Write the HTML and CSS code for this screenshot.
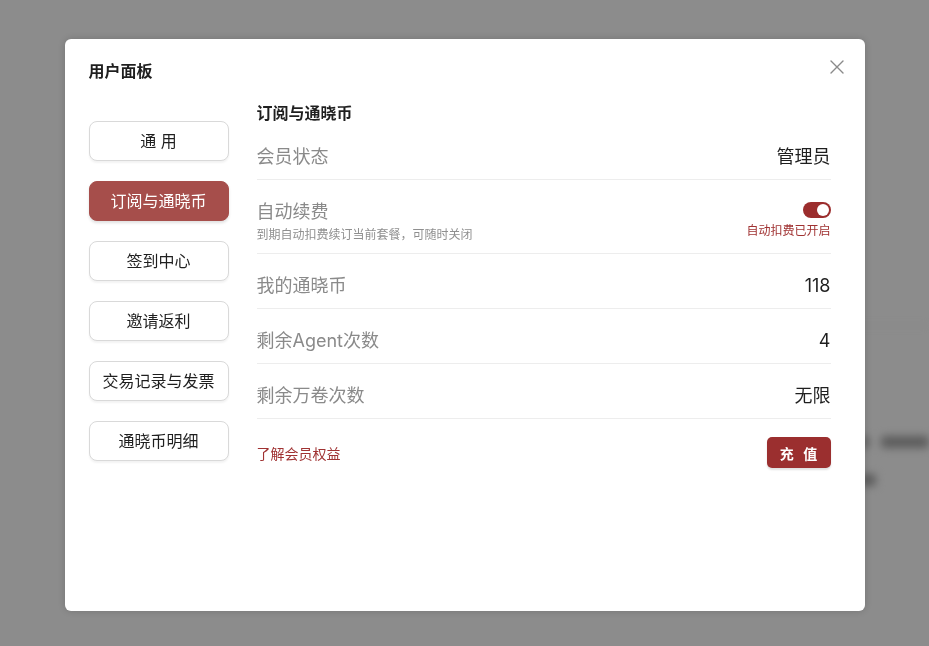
FILE: index.html
```html
<!DOCTYPE html>
<html>
<head>
<meta charset="UTF-8">
<link rel="stylesheet" href="styles.css">
</head>
<body>
<div class="page">
	<div class="page-top"></div>
	<div class="ghost-line">
		<span class="ghost w1"></span>
		<span class="ghost w2"></span>
	</div>
	<div class="ghost-line second">
		<span class="ghost w3"></span>
	</div>
</div>

<div class="mask">
	<div class="modal">
		<div class="modal-title">用户面板</div>
		<span class="close" title="关闭">
			<svg width="14" height="14" viewBox="0 0 14 14"><path d="M1 1L13 13M13 1L1 13" stroke="#8a8a8a" stroke-width="1.4" fill="none" stroke-linecap="round"/></svg>
		</span>

		<div class="modal-body">
			<div class="side">
				<button class="tab">通 用</button>
				<button class="tab active">订阅与通晓币</button>
				<button class="tab">签到中心</button>
				<button class="tab">邀请返利</button>
				<button class="tab">交易记录与发票</button>
				<button class="tab">通晓币明细</button>
			</div>

			<div class="panel">
				<h3 class="panel-title">订阅与通晓币</h3>

				<div class="row">
					<span class="label">会员状态</span>
					<span class="value">管理员</span>
				</div>
				<div class="row">
					<div>
						<div class="label">自动续费</div>
						<div class="hint">到期自动扣费续订当前套餐，可随时关闭</div>
					</div>
					<div class="renew">
						<span class="switch on"><i></i></span>
						<span class="renew-text">自动扣费已开启</span>
					</div>
				</div>
				<div class="row">
					<span class="label">我的通晓币</span>
					<span class="value">118</span>
				</div>
				<div class="row">
					<span class="label">剩余Agent次数</span>
					<span class="value">4</span>
				</div>
				<div class="row">
					<span class="label">剩余万卷次数</span>
					<span class="value">无限</span>
				</div>

				<div class="foot">
					<a class="link" href="#">了解会员权益</a>
					<button class="pay">充 值</button>
				</div>
			</div>
		</div>
	</div>
</div>
</body>
</html>
```

FILE: styles.css
```css
* {
	padding: 0;
	margin: 0;
	box-sizing: border-box;
	font-family: Inter, 'Noto Sans CJK SC', sans-serif;
}
body {
	background: #fff;
	width: 929px;
	height: 646px;
	overflow: hidden;
}

/* page behind the mask, only blurred shapes */
.page {
	filter: blur(4px);
	padding-left: 600px;
}
.page-top {
	height: 326px;
	border-bottom: 1px solid #f0f0f0;
}
.ghost-line {
	display: flex;
	gap: 12px;
	margin-top: 110px;
	padding-left: 260px;
}
.ghost-line.second {
	margin-top: 26px;
}
.ghost {
	display: block;
	height: 12px;
	border-radius: 4px;
	background: #a8a8a8;
}
.ghost.w1 { width: 16px; }
.ghost.w2 { width: 90px; }
.ghost.w3 { width: 16px; }

.mask {
	position: fixed;
	left: 0;
	top: 0;
	right: 0;
	bottom: 0;
	background: rgba(0, 0, 0, 0.45);
	display: flex;
	justify-content: center;
	align-items: flex-start;
	padding-top: 39px;
}

.modal {
	position: relative;
	width: 800px;
	height: 572px;
	background: #fff;
	border-radius: 6px;
	box-shadow: 0 0 8px rgba(0, 0, 0, 0.18);
	padding: 20px 34px 0 24px;
}
.modal-title {
	font-size: 16px;
	font-weight: 600;
	line-height: 24px;
	color: #1f1f1f;
}
.close {
	position: absolute;
	top: 21px;
	right: 21px;
	width: 14px;
	height: 14px;
	display: block;
	line-height: 0;
}

.modal-body {
	display: flex;
	gap: 28px;
	margin-top: 19px;
}

.side {
	width: 140px;
	padding-top: 19px;
	display: flex;
	flex-direction: column;
	gap: 20px;
}
.tab {
	height: 40px;
	padding-bottom: 2px;
	border: 1px solid #d9d9d9;
	border-radius: 8px;
	background: #fff;
	box-shadow: 0 2px 2px rgba(0, 0, 0, 0.05);
	font-size: 16px;
	color: #1f1f1f;
	cursor: pointer;
}
.tab.active {
	background: #a64e4b;
	border-color: #a64e4b;
	color: #fff;
	box-shadow: 0 2px 3px rgba(0, 0, 0, 0.12);
}

.panel {
	flex: 1;
}
.panel-title {
	font-size: 16px;
	font-weight: 600;
	line-height: 23px;
	color: #1f1f1f;
}
.row {
	display: flex;
	justify-content: space-between;
	align-items: flex-start;
	padding: 20px 0 10px;
	border-bottom: 1px solid #ededed;
}
.label {
	font-size: 18px;
	line-height: 24px;
	color: #8a8a8a;
}
.value {
	font-size: 18px;
	line-height: 24px;
	color: #1f1f1f;
}
.hint {
	margin-top: 3px;
	font-size: 12px;
	line-height: 16px;
	color: #8f8f8f;
}
.renew {
	display: flex;
	flex-direction: column;
	align-items: flex-end;
	padding-top: 2px;
	gap: 5px;
}
.switch {
	display: block;
	width: 28px;
	height: 16px;
	border-radius: 8px;
	background: #ccc;
	padding: 2px;
}
.switch i {
	display: block;
	width: 12px;
	height: 12px;
	border-radius: 50%;
	background: #fff;
}
.switch.on {
	background: #9b2d2d;
}
.switch.on i {
	margin-left: 12px;
}
.renew-text {
	font-size: 12px;
	line-height: 16px;
	color: #a03232;
}

.foot {
	display: flex;
	justify-content: space-between;
	align-items: center;
	padding-top: 18px;
}
.link {
	font-size: 14px;
	color: #a03232;
	text-decoration: none;
}
.pay {
	width: 64px;
	height: 31px;
	border: 0;
	border-radius: 5px;
	background: #9b2f2f;
	color: #fff;
	font-size: 14px;
	font-weight: 600;
	letter-spacing: 3px;
	padding-left: 3px;
	box-shadow: 0 2px 2px rgba(0, 0, 0, 0.12);
	cursor: pointer;
}
```
